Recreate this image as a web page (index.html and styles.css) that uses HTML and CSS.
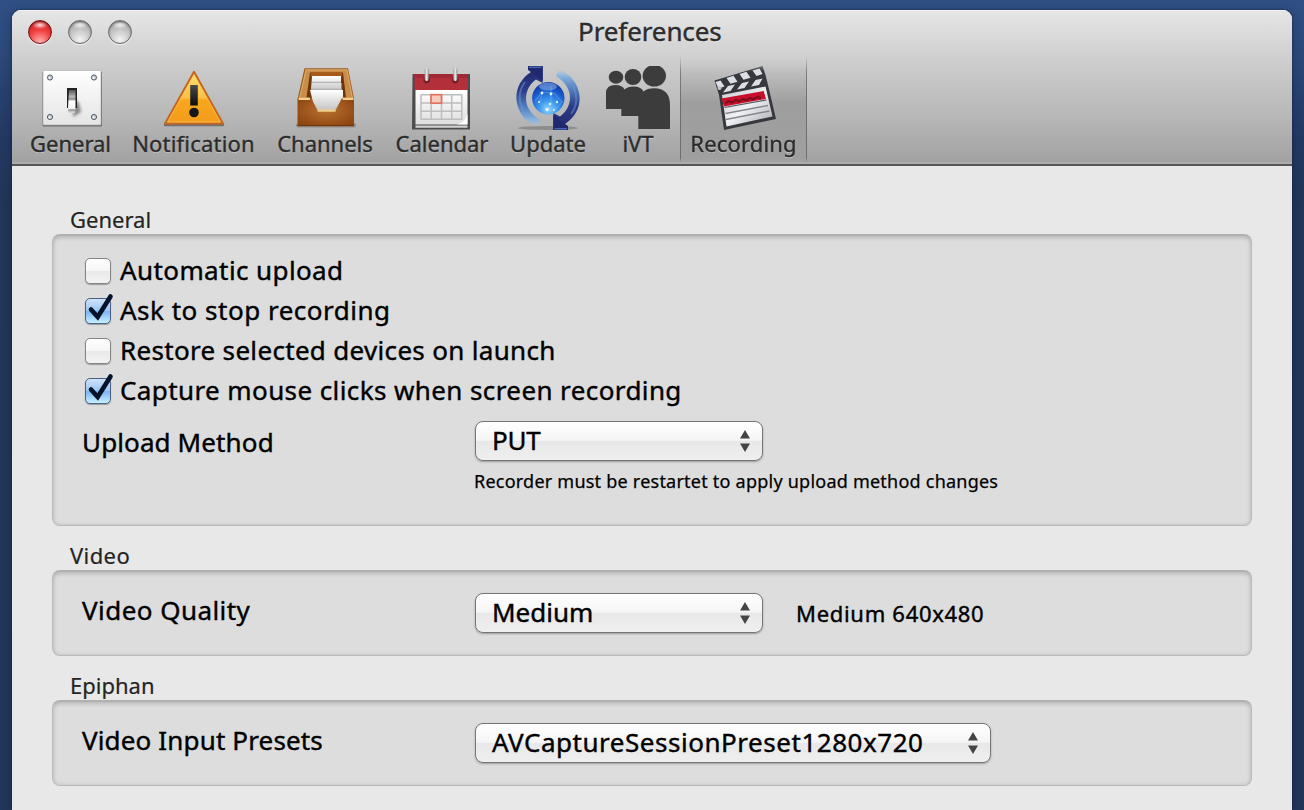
FILE: index.html
```html
<!DOCTYPE html>
<html lang="en">
<head>
<meta charset="utf-8">
<title>Preferences</title>
<link rel="stylesheet" href="styles.css">
</head>
<body>
<main class="window">
  <header class="header">
    <div class="titlebar">
      <div class="lights"><i class="light red"></i><i class="light"></i><i class="light"></i></div>
      <h1 class="title">Preferences</h1>
    </div>
    <nav class="toolbar">
      <a class="tool t-general">
        <svg class="icon" viewBox="0 0 64 64">
          <defs>
            <linearGradient id="plate" x2="0" y2="1"><stop offset="0" stop-color="#fff"/><stop offset="1" stop-color="#e4e4e4"/></linearGradient>
            <linearGradient id="knob" x2="0" y2="1"><stop offset="0" stop-color="#555"/><stop offset=".3" stop-color="#bbb"/><stop offset=".4" stop-color="#888"/><stop offset=".48" stop-color="#fff"/><stop offset=".8" stop-color="#f4f4f4"/><stop offset=".86" stop-color="#999"/><stop offset="1" stop-color="#ddd"/></linearGradient>
            <filter id="soft" x="-50%" y="-50%" width="200%" height="200%"><feGaussianBlur stdDeviation="1.6"/></filter>
          </defs>
          <rect x="2.5" y="5.5" width="59.500" height="55" rx="1" fill="#555" opacity=".75"/>
          <rect x="3" y="4.500" width="58" height="54.500" rx=".8" fill="url(#plate)" stroke="#aaa" stroke-width=".6"/>
          <path d="M34 33l5 4 2 9-8 5z" fill="#444" opacity=".6" filter="url(#soft)"/>
          <rect x="27" y="22" width="10" height="20" fill="#222"/>
          <path d="M29 24h6.500v18l-.5 5h-6.500l-.5-5z" fill="url(#knob)"/>
          <g fill="#c5cad2" stroke="#59606b" stroke-width="1"><circle cx="10" cy="11.500" r="2.600"/><circle cx="54" cy="11.500" r="2.600"/><circle cx="10" cy="51" r="2.600"/><circle cx="54" cy="51" r="2.600"/></g>
          <g fill="#fff"><circle cx="9.500" cy="12" r="1"/><circle cx="53.500" cy="12" r="1"/><circle cx="9.500" cy="51.500" r="1"/><circle cx="53.500" cy="51.500" r="1"/></g>
        </svg>
        <span class="name n-general">General</span>
      </a>
      <a class="tool t-notification">
        <svg class="icon" viewBox="0 0 64 64">
          <defs>
            <linearGradient id="warn" x2="0" y2="1"><stop offset="0" stop-color="#fde071"/><stop offset=".5" stop-color="#fbc043"/><stop offset=".54" stop-color="#f8a81c"/><stop offset="1" stop-color="#f39a1e"/></linearGradient>
            <linearGradient id="bang" x2="0" y2="1"><stop offset="0" stop-color="#4a4a4a"/><stop offset="1" stop-color="#0c0c0c"/></linearGradient>
          </defs>
          <path d="M32 7L61 59H3z" fill="#555" stroke="#555" stroke-width="2.500" stroke-linejoin="round" opacity=".7"/>
          <path d="M32 6L60.800 57.500H3.200z" fill="url(#warn)" stroke="#c7671a" stroke-width="2.200" stroke-linejoin="round"/>
          <path d="M32 8.500L58.500 56H5.500z" fill="none" stroke="#ffd97a" stroke-width=".8" opacity=".7"/>
          <rect x="28.200" y="19" width="7.600" height="20.500" fill="url(#bang)"/>
          <circle cx="32" cy="46.500" r="4.800" fill="#161616"/>
        </svg>
        <span class="name n-notification">Notification</span>
      </a>
      <a class="tool t-channels">
        <svg class="icon" viewBox="0 0 64 64">
          <defs>
            <radialGradient id="wood" cx=".5" cy=".45" r=".65"><stop offset="0" stop-color="#b9702f"/><stop offset="1" stop-color="#8c4410"/></radialGradient>
            <linearGradient id="sheet" x2="0" y2="1"><stop offset="0" stop-color="#fff"/><stop offset="1" stop-color="#c4c4c4"/></linearGradient>
          </defs>
          <rect x="3" y="57" width="60" height="4.500" rx="2" fill="#555" opacity=".4"/>
          <path d="M11.500 2.300h43.500l6 30v28H4.700v-28z" fill="#9a5a20"/>
          <path d="M13 3.800h41l5.500 28.700h-9L47 8H19l-4 24.500H6.500z" fill="#c98d49" stroke="#dca865" stroke-width="1.200"/>
          <path d="M17 6.500h33l3 25H13.500z" fill="#6e3508"/>
          <path d="M18 6.500h31l.5 4h-32z" fill="#a95a18"/>
          <path d="M19 10h29v7H18.500zM18.500 17h30v7.500H17.800z" fill="url(#sheet)"/>
          <path d="M19 16.300h29M18 23.300h31" stroke="#aaa" stroke-width="1"/>
          <path d="M17 24h33v20H22z" fill="url(#sheet)"/>
          <path d="M4.700 32H18l6.500 13.500h18.200L49 32h12v28H4.700z" fill="url(#wood)"/>
          <path d="M5.500 32.800h11.500M49.500 32.800h11M24.500 44.700h18.200" stroke="#f2cf8a" stroke-width="2.200"/>
          <path d="M18 33l6 11M49 33l-6 11" stroke="#a9662a" stroke-width="1"/>
          <path d="M4.700 59.500H61" stroke="#713408" stroke-width="1.200"/>
        </svg>
        <span class="name n-channels">Channels</span>
      </a>
      <a class="tool t-calendar">
        <svg class="icon" viewBox="0 0 64 64">
          <defs>
            <linearGradient id="page" x2="0" y2="1"><stop offset="0" stop-color="#fff"/><stop offset="1" stop-color="#dedede"/></linearGradient>
            <linearGradient id="ring" x2="1" y2="0"><stop offset="0" stop-color="#999"/><stop offset=".5" stop-color="#eee"/><stop offset="1" stop-color="#888"/></linearGradient>
          </defs>
          <path d="M2.500 8h57.500v55.500H2z" fill="#4c4c4e"/>
          <path d="M5.500 24h52V58.500H5.500z" fill="url(#page)"/>
          <path d="M5.500 59.500h52v2.300h-52z" fill="#d2d2d2"/>
          <path d="M4.500 8h53.500v16H4.500z" fill="#b3303b"/>
          <path d="M4.500 8h53.500v4H4.500z" fill="#a12835"/>
          <path d="M57.500 48v10.500H47q8-2 10.500-10.500z" fill="#fff"/>
          <path d="M11 28.800h41M11 37h41M11 45.200h41M11 53.300h41M11 28.500v25M21.200 28.500v25M31.500 28.500v25M41.700 28.500v25M51.800 28.500v25" fill="none" stroke="#bdbdbf" stroke-width="1.500"/>
          <rect x="21" y="28.700" width="10.500" height="8.500" fill="#f8c9bf" stroke="#e0745e" stroke-width="1.700"/>
          <circle cx="16.700" cy="14" r="3.400" fill="#76202a"/><circle cx="45.300" cy="14" r="3.400" fill="#76202a"/>
          <rect x="14.700" y="2" width="4" height="13" rx="2" fill="url(#ring)"/><rect x="43.300" y="2" width="4" height="13" rx="2" fill="url(#ring)"/>
        </svg>
        <span class="name n-calendar">Calendar</span>
      </a>
      <a class="tool t-update">
        <svg class="icon" viewBox="0 0 64 64">
          <defs>
            <linearGradient id="sweep" x2="0" y2="1"><stop offset="0" stop-color="#20276c"/><stop offset=".4" stop-color="#2c3c87"/><stop offset=".7" stop-color="#5783c4"/><stop offset=".88" stop-color="#86b0dc"/><stop offset="1" stop-color="#a9c8e6" stop-opacity=".3"/></linearGradient>
            <radialGradient id="globe" cx=".5" cy=".85" r=".85"><stop offset="0" stop-color="#8fd6ff"/><stop offset=".35" stop-color="#3d97ee"/><stop offset=".7" stop-color="#1a5bcc"/><stop offset="1" stop-color="#0a2f9c"/></radialGradient>
            <g id="arrow">
              <path d="M15 6C4 13-.5 24 .5 34.500 2 47 10 57 22 60.500L24 54C13 47 8.500 38 10.500 28 12 21 15.500 17 20 13.500L26.700 17V0H12v4z" fill="url(#sweep)"/>
              <path d="M12 0h14.700v15l-4-3.500-7.700-5.500z" fill="#202970"/>
              <path d="M9 16C3 24 2 34 7 44" fill="none" stroke="#6f96d0" stroke-width="2" opacity=".5"/>
              <path d="M13 1.300h12.500" stroke="#4567ae" stroke-width="1.400"/>
            </g>
          </defs>
          <ellipse cx="32" cy="62" rx="30" ry="2" fill="#555" opacity=".4"/>
          <use href="#arrow"/><use href="#arrow" transform="rotate(180 32 32)"/>
          <circle cx="32.300" cy="32.300" r="16.200" fill="url(#globe)"/>
          <ellipse cx="32" cy="20.500" rx="9" ry="4" fill="#9abff0" opacity=".5"/>
          <path d="M19 35l7-9 12 1 8 9M28 40l12 3 7-8M26 26l-2 10M35 20v18" fill="none" stroke="#8cc8ff" stroke-width=".8" opacity=".5"/>
          <g fill="#dff4ff"><circle cx="26" cy="27" r="1.400"/><circle cx="35" cy="28" r="1.400"/><circle cx="23" cy="36" r="1.100"/><circle cx="34" cy="38" r="1.200"/><circle cx="41" cy="36" r="1.200"/><circle cx="31" cy="43.500" r="1.800"/><circle cx="38" cy="44" r="1"/></g>
        </svg>
        <span class="name n-update">Update</span>
      </a>
      <a class="tool t-ivt">
        <svg class="icon" viewBox="0 0 64 64" fill="#3c3c3c">
          <ellipse cx="10" cy="11.200" rx="7.200" ry="6.500"/><ellipse cx="27" cy="11" rx="8.300" ry="8"/><ellipse cx="48.300" cy="9.800" rx="11.700" ry="10.800"/>
          <path d="M0 43V27q0-8 9.500-8 7 0 9 4.500 3-3 9-3 7.500 0 10 5 4-3.200 10.500-3.200Q64 22.500 64 39v24H32.300V50H15.300v-7z"/>
        </svg>
        <span class="name n-ivt">iVT</span>
      </a>
      <a class="tool t-recording selected">
        <svg class="icon" viewBox="0 0 64 64">
          <defs><linearGradient id="slate" x2="1" y2="1"><stop offset="0" stop-color="#c9cbd0"/><stop offset=".5" stop-color="#f0f1f4"/><stop offset="1" stop-color="#a6a9af"/></linearGradient></defs>
          <path d="M2.500 14.500L50.500 0l3 9 2.500 10L64 53 12 64 7 29z" fill="#36383e"/>
          <path d="M10 29L53.500 20.500 60.500 50.500 14.500 60.500z" fill="url(#slate)"/>
          <path d="M3.500 16l5-1.500 4 6-6 2zM14.500 12l7-2.200 4 6-7 2zM27.500 8l7-2.200 4 6-7 2zM40.500 4.500l7-2 3 5.500-6 2z" fill="#dcdfe5"/>
          <path d="M11 26.500l5-6.500 7-1.500-4.500 6.500zM25 23.500l5-6.500 7-1.500-4.500 6.500zM39 20.500l4.500-6.500 7-1.500-3.500 6.500z" fill="#dcdfe5"/>
          <circle cx="7.500" cy="22" r="2" fill="#c5c8ce"/>
          <path d="M9.700 32.500L51.700 25 54 33 12 40.500z" fill="#c8102c"/>
          <path d="M13 37.500l4-2.500 3 1.500 4-2.500 3 1.500 4-2.500 3 1.500 4-2.500 3 1.500 4-2.500 4 1" fill="none" stroke="#7d0c1c" stroke-width="2"/>
          <path d="M12.500 41.500L54.500 34" stroke="#55585f" stroke-width="1.200"/>
          <path d="M13.500 47.500L56 39.500M14 53.500L57.500 45" fill="none" stroke="#83868d" stroke-width="1.400"/>
        </svg>
        <span class="name n-recording">Recording</span>
      </a>
    </nav>
  </header>

  <section class="content">
    <h2 class="group-label l-general">General</h2>
    <div class="group group-general">
      <label class="check"><span class="box"></span><span class="check-text c-auto">Automatic upload</span></label>
      <label class="check"><span class="box on"><svg class="tick" viewBox="0 0 32 32"><path d="M7 17.500L13.700 25 26.500 4.500" /></svg></span><span class="check-text c-ask">Ask to stop recording</span></label>
      <label class="check"><span class="box"></span><span class="check-text c-restore">Restore selected devices on launch</span></label>
      <label class="check"><span class="box on"><svg class="tick" viewBox="0 0 32 32"><path d="M7 17.500L13.700 25 26.500 4.500" /></svg></span><span class="check-text c-capture">Capture mouse clicks when screen recording</span></label>
      <div class="row row-upload">
        <span class="field f-upload">Upload Method</span>
        <div class="select"><span class="v-put">PUT</span><svg class="arrows" viewBox="0 0 10 22"><path d="M5 0l5 8.500H0zM5 22l5-8.500H0z"/></svg></div>
      </div>
      <p class="note">Recorder must be restartet to apply upload method changes</p>
    </div>

    <h2 class="group-label l-video">Video</h2>
    <div class="group group-small">
      <div class="row">
        <span class="field f-quality">Video Quality</span>
        <div class="select"><span class="v-medium">Medium</span><svg class="arrows" viewBox="0 0 10 22"><path d="M5 0l5 8.500H0zM5 22l5-8.500H0z"/></svg></div>
        <span class="hint">Medium 640x480</span>
      </div>
    </div>

    <h2 class="group-label l-epiphan">Epiphan</h2>
    <div class="group group-small">
      <div class="row">
        <span class="field f-presets">Video Input Presets</span>
        <div class="select wide"><span class="v-preset">AVCaptureSessionPreset1280x720</span><svg class="arrows" viewBox="0 0 10 22"><path d="M5 0l5 8.500H0zM5 22l5-8.500H0z"/></svg></div>
      </div>
    </div>
  </section>
</main>
</body>
</html>
```
FILE: styles.css
```css
* { box-sizing: border-box; }
body {
  margin: 0;
  height: 810px;
  overflow: hidden;
  padding: 10px 12px 0;
  background: linear-gradient(#304f84 0, #2b4878 60px, #233a64 130px, #213658 200px, #22365a 100%);
  font-family: "Noto Sans", "Open Sans", sans-serif;
  color: #000;
  -webkit-text-stroke: .4px currentColor;
}
h1, h2, p { margin: 0; font-weight: 400; }
.window {
  height: 800px;
  border-radius: 9px 9px 0 0;
  background: #e8e8e8;
  box-shadow: 0 0 2px #14233f, 0 2px 8px rgba(10, 20, 50, .35);
  overflow: hidden;
}
.header {
  height: 156px;
  background: linear-gradient(#e6e6e6 0, #cecece 50px, #b8b8b8 105px, #a2a2a2 152px);
  border-bottom: 2px solid #565656;
  box-shadow: inset 0 1px 0 #f2f2f2, inset 0 -2px 0 #acacac;
}
.titlebar { height: 46px; display: flex; align-items: center; padding: 0 16px; }
.lights { display: flex; gap: 16px; width: 550px; margin-top: -2px; }
.light {
  width: 24px; height: 24px; border-radius: 50%;
  border: 1.5px solid #6b6b6b;
  background: radial-gradient(ellipse 8px 4px at 50% 18%, rgba(255,255,255,.8), rgba(255,255,255,0)), radial-gradient(circle at 50% 85%, #f2f2f2 0, #c4c4c4 50%, #999 100%);
  box-shadow: 0 1px 1px rgba(255,255,255,.7), inset 0 1px 2px rgba(0,0,0,.4);
}
.light.red {
  border-color: #7d1519;
  background: radial-gradient(ellipse 8px 4px at 50% 18%, rgba(255,255,255,.85), rgba(255,255,255,0)), radial-gradient(circle at 50% 95%, #ffb3b0 0, #f0403f 50%, #c9191f 100%);
}
.title { font-size: 26px; line-height: 46px; color: #2c2c2c; text-shadow: 0 1px 0 rgba(255,255,255,.5); letter-spacing: -.1px; margin-top: -4px; }
.toolbar { display: flex; padding-left: 8px; height: 108px; }
.tool { display: flex; flex-direction: column; align-items: center; padding-top: 10px; }
.icon { width: 64px; height: 64px; flex: none; }
.name { margin-top: -1px; font-size: 22px; line-height: 28px; white-space: nowrap; color: #2c2c2c; text-shadow: 0 1px 0 rgba(255,255,255,.45); }
.t-general { width: 101px; }
.t-general .icon { margin-left: 3px; }
.n-notification { letter-spacing: .2px; }
.n-recording { letter-spacing: .15px; }
.t-notification { width: 145px; }
.t-channels { width: 118px; }
.t-calendar { width: 116px; }
.t-update { width: 96px; }
.t-ivt { width: 84px; }
.t-recording { width: 127px; }
.selected {
  height: 106px;
  background: linear-gradient(90deg, rgba(70,70,70,.55) 0 1px, transparent 1px calc(100% - 1px), rgba(70,70,70,.55) calc(100% - 1px)), linear-gradient(rgba(0,0,0,0), rgba(0,0,0,.16) 45%, rgba(0,0,0,.1) 70%, rgba(0,0,0,.02));
  -webkit-mask-image: linear-gradient(transparent, #000 15%, #000 96%, transparent);
}
.content { padding: 40px 40px 0; }
.group-label { height: 28px; line-height: 26px; padding-left: 18px; font-size: 22px; color: #242424; -webkit-text-stroke-width: .2px; }
.l-video { letter-spacing: .4px; }
.group {
  border-radius: 8px;
  background: #ddd;
  border: 1px solid #b9b9b9;
  border-top: 2px solid #b0b0b0;
  box-shadow: inset 0 2px 4px rgba(0,0,0,.13), inset 0 0 4px rgba(0,0,0,.1);
}
.group-general { height: 292px; margin-bottom: 16px; padding: 15px 29px 0; }
.group-small { height: 86px; margin-bottom: 16px; padding: 21px 29px 0; }
.check { display: flex; align-items: center; height: 40px; padding-left: 3px; font-size: 26px; }
.box {
  width: 26px; height: 26px; border-radius: 5px; flex: none;
  border: 1.5px solid #858585;
  background: linear-gradient(#fff 0, #f6f6f6 48%, #e9e9e9 50%, #f3f3f3 100%);
  box-shadow: 0 1px 1px rgba(0,0,0,.3);
}
.box.on { border-color: #4b5f8a; background: linear-gradient(#cfe3f8 0, #9cc6f3 48%, #7cb4ef 52%, #c8f0ff 100%); }
.tick { display: block; width: 32px; height: 32px; margin: -7px 0 0 -2px; }
.tick path { fill: none; stroke: #03142a; stroke-width: 4.600; stroke-linecap: round; stroke-linejoin: miter; }
.check-text { margin-left: 9px; line-height: 36px; margin-top: -2px; white-space: nowrap; letter-spacing: .4px; }
.c-ask { letter-spacing: .5px; }
.c-restore { letter-spacing: .32px; }
.row { display: flex; height: 42px; align-items: flex-start; font-size: 26px; }
.row-upload { margin-top: 10px; }
.field { width: 393px; line-height: 34px; white-space: nowrap; }
.f-upload { line-height: 42px; letter-spacing: .12px; }
.f-quality { letter-spacing: .45px; }
.f-presets { letter-spacing: .15px; }
.select {
  display: flex; align-items: center; justify-content: space-between;
  width: 288px; height: 40px; padding: 0 12px 0 16px;
  border: 1px solid #767676; border-radius: 8px;
  background: linear-gradient(#fff 0, #f5f5f5 48%, #e8e8e8 51%, #efefef 100%);
  box-shadow: 0 1px 2px rgba(0,0,0,.3);
  line-height: 36px; white-space: nowrap;
}
.select span { margin-top: -3px; }
.v-put { letter-spacing: -.3px; }
.v-preset { letter-spacing: .53px; }
.wide { width: 516px; }
.arrows { width: 10px; height: 22px; fill: #444; flex: none; }
.note { margin: 7px 0 0 392px; font-size: 18px; line-height: 22px; letter-spacing: .23px; white-space: nowrap; -webkit-text-stroke-width: .25px; }
.hint { margin-left: 33px; font-size: 22px; line-height: 40px; letter-spacing: .7px; }
```
